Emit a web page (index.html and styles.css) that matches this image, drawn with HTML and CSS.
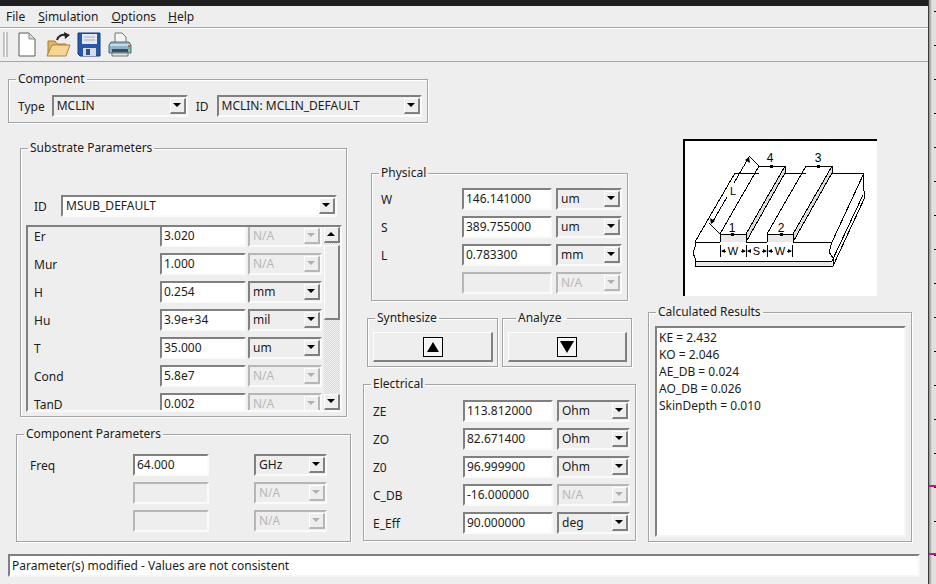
FILE: index.html
```html
<!DOCTYPE html>
<html lang="en">
<head>
  <meta charset="UTF-8">
  <title>Transmission Line Calculator</title>
  <link rel="stylesheet" href="styles.css">
</head>
<body>
  <div class="window">
    <div class="titlebar"></div>

    <div class="menubar">
      <span class="menu">File</span>
      <span class="menu"><u>S</u>imulation</span>
      <span class="menu"><u>O</u>ptions</span>
      <span class="menu"><u>H</u>elp</span>
    </div>

    <div class="toolbar">
      <div class="grip"></div>
      <svg class="tool tool-new" viewBox="0 0 18 25">
        <path d="M1 1H11L17 7V24H1Z" fill="#fff" stroke="#5a5a5a"/>
        <path d="M11 1V7H17Z" fill="#d8d8d8" stroke="#8a8a8a"/>
      </svg>
      <svg class="tool tool-open" viewBox="0 0 25 25">
        <path d="M2 9H9L11 12H20V23H2Z" fill="#e2b469" stroke="#a97a2c"/>
        <path d="M6 13H24L20 24H1Z" fill="#f9d594" stroke="#b08236"/>
        <path d="M11 8C12 4 16 2 20 3" fill="none" stroke="#222" stroke-width="2"/>
        <path d="M18 0L24 3L19 7Z" fill="#222"/>
      </svg>
      <svg class="tool tool-save" viewBox="0 0 24 25">
        <path d="M1 1H23V24H3L1 22Z" fill="#2659a8" stroke="#123a7c"/>
        <rect x="5" y="2" width="15" height="10" fill="#e4e8f0"/>
        <path d="M7 5H18M7 8H18" stroke="#a8b0c0"/>
        <rect x="6" y="16" width="13" height="8" fill="#d6dbe4"/>
        <rect x="9" y="17" width="4" height="6" fill="#2f4f86"/>
      </svg>
      <svg class="tool tool-print" viewBox="0 0 24 25">
        <path d="M7 1H14L18 5V12H7Z" fill="#f4f4f4" stroke="#777"/>
        <path d="M3 10H21L23 13V21H1V13Z" fill="#8fb2c6" stroke="#4e6a7c"/>
        <rect x="2" y="12" width="20" height="2" fill="#c6dbe6"/>
        <rect x="4" y="17" width="16" height="3" fill="#31505f"/>
        <path d="M21 13V15" stroke="#d45b4c" stroke-width="2"/>
        <path d="M21 15V17" stroke="#74b45c" stroke-width="2"/>
        <path d="M4 21H20V24H4Z" fill="#dfe4e8" stroke="#777"/>
      </svg>
    </div>

    <div class="content">
      <fieldset class="group component">
        <legend>Component</legend>
        <div class="component-row">
          <span class="label">Type</span>
          <div class="combo combo-type"><span>MCLIN</span><i class="arrow"></i></div>
          <span class="label">ID</span>
          <div class="combo combo-id"><span>MCLIN: MCLIN_DEFAULT</span><i class="arrow"></i></div>
        </div>
      </fieldset>

      <div class="columns">
        <div class="col col-left">
          <fieldset class="group substrate">
            <legend>Substrate Parameters</legend>
            <div class="sub-id">
              <span class="label">ID</span>
              <div class="combo combo-white"><span>MSUB_DEFAULT</span><i class="arrow"></i></div>
            </div>
            <div class="scroll-panel">
              <div class="param-list">
                <div class="param"><span class="label">Er</span><div class="field">3.020</div><div class="combo off"><span>N/A</span><i class="arrow"></i></div></div>
                <div class="param"><span class="label">Mur</span><div class="field">1.000</div><div class="combo off"><span>N/A</span><i class="arrow"></i></div></div>
                <div class="param"><span class="label">H</span><div class="field">0.254</div><div class="combo"><span>mm</span><i class="arrow"></i></div></div>
                <div class="param"><span class="label">Hu</span><div class="field">3.9e+34</div><div class="combo"><span>mil</span><i class="arrow"></i></div></div>
                <div class="param"><span class="label">T</span><div class="field">35.000</div><div class="combo"><span>um</span><i class="arrow"></i></div></div>
                <div class="param"><span class="label">Cond</span><div class="field">5.8e7</div><div class="combo off"><span>N/A</span><i class="arrow"></i></div></div>
                <div class="param"><span class="label">TanD</span><div class="field">0.002</div><div class="combo off"><span>N/A</span><i class="arrow"></i></div></div>
              </div>
              <div class="scrollbar">
                <div class="sb-btn"><i class="arrow-up"></i></div>
                <div class="sb-thumb"></div>
                <div class="sb-btn"><i class="arrow"></i></div>
              </div>
            </div>
          </fieldset>

          <fieldset class="group comp-params">
            <legend>Component Parameters</legend>
            <div class="comp-row"><span class="label">Freq</span><div class="field">64.000</div><div class="combo"><span>GHz</span><i class="arrow"></i></div></div>
            <div class="comp-row"><span class="label"></span><div class="field off"></div><div class="combo off"><span>N/A</span><i class="arrow"></i></div></div>
            <div class="comp-row"><span class="label"></span><div class="field off"></div><div class="combo off"><span>N/A</span><i class="arrow"></i></div></div>
          </fieldset>
        </div>

        <div class="col col-mid">
          <fieldset class="group physical">
            <legend>Physical</legend>
            <div class="phys-row"><span class="label">W</span><div class="field">146.141000</div><div class="combo"><span>um</span><i class="arrow"></i></div></div>
            <div class="phys-row"><span class="label">S</span><div class="field">389.755000</div><div class="combo"><span>um</span><i class="arrow"></i></div></div>
            <div class="phys-row"><span class="label">L</span><div class="field">0.783300</div><div class="combo"><span>mm</span><i class="arrow"></i></div></div>
            <div class="phys-row"><span class="label"></span><div class="field off"></div><div class="combo off"><span>N/A</span><i class="arrow"></i></div></div>
          </fieldset>

          <div class="actions">
            <fieldset class="group action">
              <legend>Synthesize</legend>
              <div class="push"><span class="push-icon"><i class="tri-up"></i></span></div>
            </fieldset>
            <fieldset class="group action action-analyze">
              <legend>Analyze</legend>
              <div class="push"><span class="push-icon"><i class="tri-down"></i></span></div>
            </fieldset>
          </div>

          <fieldset class="group electrical">
            <legend>Electrical</legend>
            <div class="elec-row"><span class="label">ZE</span><div class="field">113.812000</div><div class="combo"><span>Ohm</span><i class="arrow"></i></div></div>
            <div class="elec-row"><span class="label">ZO</span><div class="field">82.671400</div><div class="combo"><span>Ohm</span><i class="arrow"></i></div></div>
            <div class="elec-row"><span class="label">Z0</span><div class="field">96.999900</div><div class="combo"><span>Ohm</span><i class="arrow"></i></div></div>
            <div class="elec-row"><span class="label">C_DB</span><div class="field">-16.000000</div><div class="combo off"><span>N/A</span><i class="arrow"></i></div></div>
            <div class="elec-row"><span class="label">E_Eff</span><div class="field">90.000000</div><div class="combo"><span>deg</span><i class="arrow"></i></div></div>
          </fieldset>
        </div>

        <div class="col col-right">
          <div class="diagram">
            <svg viewBox="685 141 192 155" width="192" height="155">
              <path d="M720 234H746V242H720ZM767 234H793V242H767Z" fill="#e8e8e8"/>
              <path d="M746 234L785 166V173L746 242ZM793 234L832 166V173L793 242Z" fill="#dcdcdc"/>
              <path d="M695 261H832L833 266H695Z" fill="#e8e8e8"/>
              <g class="diagram-lines">
                <path d="M695 242L735 173H759M785 173H806M832 173H864"/>
                <path d="M695 242H720M746 242H767M793 242H832"/>
                <path d="M695 242V247L693 253L695 258V266H833"/>
                <path d="M695 261H832"/>
                <path d="M832 242L829 252L833 258V266"/>
                <path d="M864 173L863 185L865 197L833 266M832 242L864 173"/>
                <path d="M863 195L832 261"/>
                <path d="M720 234H746L785 166H759L720 234V242"/>
                <path d="M746 234V242L785 173V166"/>
                <path d="M767 234H793L832 166H806L767 234V242"/>
                <path d="M793 234V242L832 173V166"/>
                <path d="M720 245V257M746 245V257M767 245V257M792 245V257"/>
                <path d="M722 251H726M741 251H745M748 251H751M762 251H766M769 251H773M787 251H791"/>
                <path d="M749 157L734 183M727 197L712 223"/>
                <path d="M749 156L759 166M709 223L720 234"/>
              </g>
              <path d="M721 251L725 249V253ZM746 251L742 249V253ZM747 251L751 249V253ZM767 251L763 249V253ZM768 251L772 249V253ZM792 251L788 249V253ZM749 157L750 163L745 160ZM711 224L710 218L715 221Z" fill="#000"/>
              <path d="M731 233h3v3h-3zM780 233h3v3h-3zM770 165h3v3h-3zM817 165h3v3h-3z" fill="#000"/>
              <g class="diagram-text">
                <text x="733" y="255" text-anchor="middle">W</text>
                <text x="756.5" y="255" text-anchor="middle">S</text>
                <text x="780" y="255" text-anchor="middle">W</text>
                <text class="port" x="732" y="232" text-anchor="middle">1</text>
                <text class="port" x="781" y="232" text-anchor="middle">2</text>
                <text class="port" x="770" y="162" text-anchor="middle">4</text>
                <text class="port" x="818" y="162" text-anchor="middle">3</text>
                <text x="733" y="195" text-anchor="middle">L</text>
              </g>
            </svg>
          </div>

          <fieldset class="group results">
            <legend>Calculated Results</legend>
            <div class="results-box">
              <div>KE = 2.432</div>
              <div>KO = 2.046</div>
              <div>AE_DB = 0.024</div>
              <div>AO_DB = 0.026</div>
              <div>SkinDepth = 0.010</div>
            </div>
          </fieldset>
        </div>
      </div>

      <div class="statusbar">Parameter(s) modified - Values are not consistent</div>
    </div>
  </div>

  <div class="edge">
    <i class="edge-mark edge-mark-a"></i>
    <i class="edge-mark edge-mark-b"></i>
  </div>
</body>
</html>
```

FILE: styles.css
```css
* {
  box-sizing: border-box;
}

html, body {
  margin: 0;
  height: 584px;
  overflow: hidden;
}

body {
  display: flex;
  width: 936px;
  background-color: #e2e0df;
  color: #1c1c1c;
  font-family: "Noto Sans", sans-serif;
  font-size: 12px;
  line-height: 16px;
}

.window {
  width: 929px;
  height: 584px;
  flex: none;
  background-color: #eeeeee;
  border-right: 1px solid #3c3c3c;
}

.titlebar {
  height: 6px;
  background-color: #1f1f1f;
}

/* menu + toolbar */
.menubar {
  display: flex;
  height: 22px;
  padding: 3px 0 0 6px;
  border-bottom: 1px solid #a6a6a6;
  box-shadow: 0 1px 0 #ffffff;
}

.menu:nth-child(1) { margin-right: 13px; }
.menu:nth-child(2) { margin-right: 13px; }
.menu:nth-child(3) { margin-right: 12px; }

.toolbar {
  display: flex;
  align-items: center;
  height: 34px;
  padding: 0 0 0 3px;
  border-bottom: 1px solid #a6a6a6;
}

.grip {
  width: 5px;
  height: 25px;
  margin-right: 10px;
  border-left: 2px solid #c4c4c4;
  border-right: 2px solid #c4c4c4;
  box-shadow: inset 1px 0 0 #ffffff;
}

.tool {
  display: block;
  height: 25px;
}

.tool-new { width: 18px; margin-right: 10px; }
.tool-open { width: 25px; margin-right: 6px; }
.tool-save { width: 24px; margin-right: 7px; }
.tool-print { width: 24px; }

/* group boxes */
.group {
  min-width: 0;
  margin: 0;
  padding: 0;
  border: 1px solid #a4a4a4;
  box-shadow: 1px 1px 0 #ffffff, inset 1px 1px 0 #ffffff;
}

.group legend {
  margin-left: 7px;
  padding: 0 2px;
  line-height: 16px;
}

.content {
  padding: 9px 0 0 8px;
}

.label {
  padding-top: 1px;
  white-space: nowrap;
}

/* sunken boxes */
.field, .combo {
  height: 22px;
  border-style: solid;
  border-width: 2px;
  border-color: #808080 #fafafa #fafafa #808080;
  line-height: 18px;
  white-space: nowrap;
  overflow: hidden;
}

.field {
  padding-left: 2px;
  background-color: #ffffff;
}

.field.off {
  background-color: #eeeeee;
  border-color: #b6b6b6 #fafafa #fafafa #b6b6b6;
}

.combo {
  display: flex;
  justify-content: space-between;
  align-items: flex-start;
  padding-left: 3px;
  background-color: #eeeeee;
}

.combo-white {
  background-color: #ffffff;
}

.combo.off {
  border-color: #b6b6b6 #fafafa #fafafa #b6b6b6;
  color: #b8b8b8;
}

.combo .arrow {
  position: relative;
  flex: none;
  width: 16px;
  height: 16px;
  margin-top: 1px;
  background-color: #eeeeee;
  border-style: solid;
  border-width: 1px 2px 2px 1px;
  border-color: #ffffff #808080 #808080 #ffffff;
}

.combo.off .arrow {
  border-color: #ffffff #b6b6b6 #b6b6b6 #ffffff;
}

.arrow::after {
  content: "";
  position: absolute;
  left: 2px;
  top: 4px;
  border-style: solid;
  border-width: 4px 4px 0 4px;
  border-color: #000000 transparent transparent transparent;
}

.combo.off .arrow::after {
  border-top-color: #b0b0b0;
}

/* component */
.component {
  width: 420px;
  height: 52px;
  margin-bottom: 16px;
}

.component-row {
  display: flex;
  align-items: center;
  padding: 8px 0 0 9px;
}

.component-row .label:first-child {
  margin-right: 7px;
}

.combo-type {
  width: 136px;
  margin-right: 8px;
}

.component-row .label:nth-child(3) {
  margin-right: 8px;
}

.combo-id {
  width: 205px;
}

/* columns */
.columns {
  display: flex;
  align-items: flex-start;
  height: 409px;
}

.col {
  flex: none;
}

.col-left {
  width: 335px;
  margin: 1px 12px 0 8px;
}

.col-mid {
  width: 273px;
  margin: 26px 12px 0 0;
}

.col-right {
  width: 264px;
}

/* substrate */
.substrate {
  width: 327px;
  height: 277px;
  margin: 0 0 9px 4px;
}

.sub-id {
  display: flex;
  align-items: center;
  padding: 39px 0 0 13px;
}

.sub-id .label {
  width: 27px;
  flex: none;
}

.sub-id .combo {
  width: 276px;
}

.scroll-panel {
  display: flex;
  width: 316px;
  height: 187px;
  margin: 8px 0 0 5px;
  border-style: solid;
  border-width: 2px;
  border-color: #808080 #fafafa #fafafa #808080;
  overflow: hidden;
}

.param-list {
  flex: 1;
  margin-top: -2px;
  padding-left: 6px;
}

.param {
  display: grid;
  grid-template-columns: 126px 88px 74px;
  align-items: center;
  height: 22px;
  margin-bottom: 6px;
}

.param .field {
  width: 86px;
}

.scrollbar {
  display: flex;
  flex-direction: column;
  flex: none;
  width: 16px;
  background-color: #e4e4e4;
  background-image: repeating-conic-gradient(#f2f2f2 0 25%, #d8d8d8 0 50%);
  background-size: 2px 2px;
}

.sb-btn {
  position: relative;
  flex: none;
  height: 16px;
  background-color: #eeeeee;
  border-style: solid;
  border-width: 1px 2px 2px 1px;
  border-color: #ffffff #808080 #808080 #ffffff;
}

.sb-btn:last-child {
  margin-top: auto;
}

.sb-thumb {
  height: 75px;
  margin-top: 2px;
  background-color: #eeeeee;
  border-style: solid;
  border-width: 1px 2px 2px 1px;
  border-color: #ffffff #808080 #808080 #ffffff;
}

.arrow-up {
  position: absolute;
  left: 2px;
  top: 4px;
  border-style: solid;
  border-width: 0 4px 4px 4px;
  border-color: transparent transparent #000000 transparent;
}

/* component params */
.comp-params {
  width: 335px;
  height: 116px;
}

.comp-row {
  display: grid;
  grid-template-columns: 102px 76px 45px 73px;
  align-items: center;
  height: 22px;
  margin: 0 0 6px 13px;
}

.comp-row {
  grid-template-columns: 103px 76px 45px 73px;
}

.comp-row:first-of-type {
  margin-top: 12px;
}

.comp-row .combo {
  grid-column: 4;
}

/* physical */
.physical {
  width: 257px;
  height: 136px;
  margin: 0 0 9px 8px;
}

.phys-row {
  display: grid;
  grid-template-columns: 77px 90px 66px;
  gap: 0 4px;
  align-items: center;
  height: 22px;
  margin: 0 0 6px 9px;
}

.phys-row:first-of-type {
  margin-top: 7px;
}

.actions {
  display: flex;
  gap: 4px;
  margin: 0 4px 9px;
}

.action {
  width: 131px;
  height: 57px;
}

.action-analyze {
  width: 130px;
}

.action-analyze legend {
  margin-left: 13px;
  padding: 0 6px 0 2px;
}

.push {
  display: flex;
  align-items: center;
  justify-content: center;
  height: 30px;
  margin: 6px 4px 0 5px;
  border-style: solid;
  border-width: 1px 2px 2px 1px;
  border-color: #ffffff #808080 #808080 #ffffff;
}

.push-icon {
  position: relative;
  display: block;
  width: 20px;
  height: 20px;
  background-color: #f4f4f4;
  border: 1px solid #000000;
  box-shadow: inset 1px 1px 0 #ffffff;
}

.tri-up, .tri-down {
  position: absolute;
  border-style: solid;
  border-color: transparent;
}

.tri-up {
  left: 3px;
  top: 4px;
  border-width: 0 6px 10px 6px;
  border-bottom-color: #000000;
}

.tri-down {
  left: 2px;
  top: 3px;
  border-width: 12px 7px 0 7px;
  border-top-color: #000000;
}

/* electrical */
.electrical {
  width: 273px;
  height: 165px;
}

.elec-row {
  display: grid;
  grid-template-columns: 90px 90px 77px;
  align-items: center;
  height: 22px;
  margin: 0 0 6px 9px;
}

.elec-row:first-of-type {
  margin-top: 8px;
}

.elec-row .combo {
  margin-left: 4px;
  width: 73px;
}

/* right side */
.diagram {
  width: 194px;
  height: 157px;
  margin: 0 0 8px 35px;
  background-color: #ffffff;
  border-top: 2px solid #000000;
  border-left: 2px solid #000000;
}

.diagram svg {
  display: block;
}

.diagram-lines path {
  fill: none;
  stroke: #000000;
  shape-rendering: crispEdges;
}

.diagram-text text {
  font-family: "Liberation Sans", sans-serif;
  font-size: 11px;
  fill: #000000;
}

.diagram-text .port {
  font-size: 12px;
}

.results {
  width: 264px;
  height: 238px;
}

.results-box {
  height: 211px;
  margin: 6px 5px 0 6px;
  padding: 1px 0 0 2px;
  background-color: #ffffff;
  border-style: solid;
  border-width: 2px;
  border-color: #808080 #f6f6f6 #f6f6f6 #808080;
  line-height: 17px;
}

/* status */
.statusbar {
  width: 912px;
  height: 23px;
  margin-top: 6px;
  padding-left: 2px;
  background-color: #ffffff;
  border-style: solid;
  border-width: 2px;
  border-color: #808080 #f6f6f6 #f6f6f6 #808080;
  line-height: 19px;
  white-space: nowrap;
}

/* strip of the window behind */
.edge {
  position: relative;
  flex: 1;
  height: 584px;
  background-image:
    repeating-linear-gradient(to bottom, transparent 0 11px, #000000 11px 12px, transparent 12px 34px),
    linear-gradient(to right, #8c8c8c, #e2e0df 3px);
  background-size: 2px 100%, 100% 100%;
  background-position: right top, left top;
  background-repeat: no-repeat;
}

.edge-mark {
  position: absolute;
  left: 0;
  width: 7px;
  height: 2px;
  background-color: #c2168c;
}

.edge-mark-a { top: 485px; }
.edge-mark-b { top: 553px; }
```
